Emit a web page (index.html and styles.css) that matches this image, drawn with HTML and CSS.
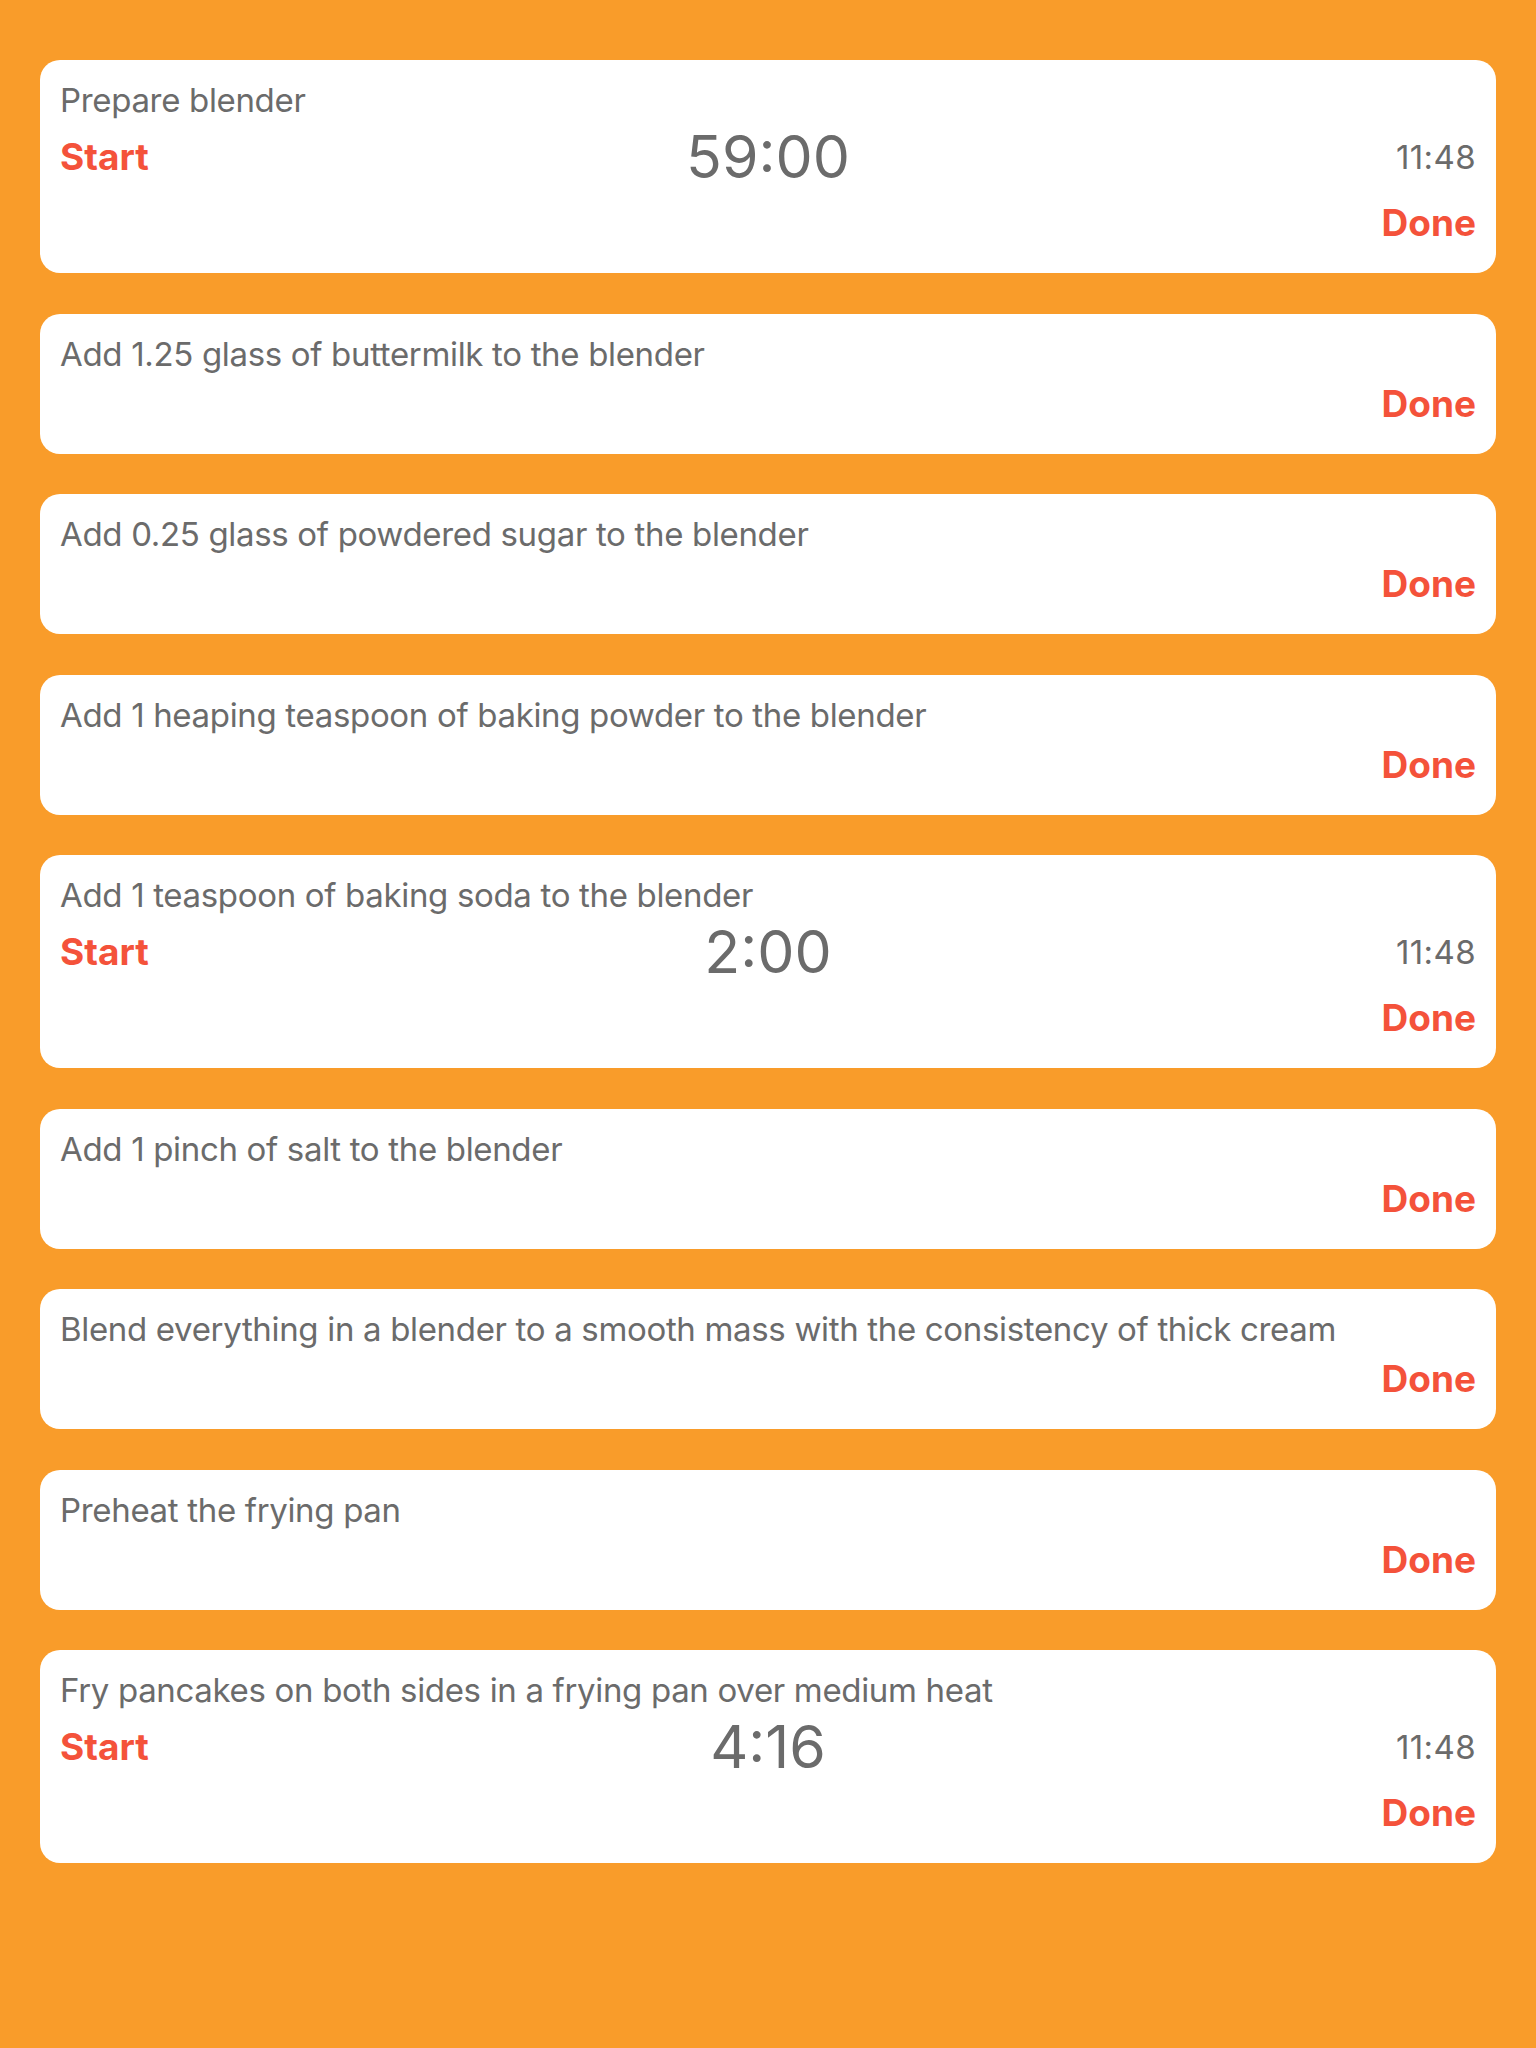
FILE: index.html
```html
<!DOCTYPE html>
<html lang="en">
<head>
<meta charset="utf-8">
<title>Pancakes</title>
<link rel="stylesheet" href="styles.css">
</head>
<body>
<main class="steps">
  <section class="card">
    <div class="title">Prepare blender</div>
    <div class="timer-row">
      <span class="action start">Start</span>
      <span class="timer">59:00</span>
      <span class="clock">11:48</span>
    </div>
    <div class="done-row"><span class="action">Done</span></div>
  </section>
  <section class="card">
    <div class="title">Add 1.25 glass of buttermilk to the blender</div>
    <div class="done-row"><span class="action">Done</span></div>
  </section>
  <section class="card">
    <div class="title">Add 0.25 glass of powdered sugar to the blender</div>
    <div class="done-row"><span class="action">Done</span></div>
  </section>
  <section class="card">
    <div class="title">Add 1 heaping teaspoon of baking powder to the blender</div>
    <div class="done-row"><span class="action">Done</span></div>
  </section>
  <section class="card">
    <div class="title">Add 1 teaspoon of baking soda to the blender</div>
    <div class="timer-row">
      <span class="action start">Start</span>
      <span class="timer">2:00</span>
      <span class="clock">11:48</span>
    </div>
    <div class="done-row"><span class="action">Done</span></div>
  </section>
  <section class="card">
    <div class="title">Add 1 pinch of salt to the blender</div>
    <div class="done-row"><span class="action">Done</span></div>
  </section>
  <section class="card">
    <div class="title">Blend everything in a blender to a smooth mass with the consistency of thick cream</div>
    <div class="done-row"><span class="action">Done</span></div>
  </section>
  <section class="card">
    <div class="title">Preheat the frying pan</div>
    <div class="done-row"><span class="action">Done</span></div>
  </section>
  <section class="card">
    <div class="title">Fry pancakes on both sides in a frying pan over medium heat</div>
    <div class="timer-row">
      <span class="action start">Start</span>
      <span class="timer">4:16</span>
      <span class="clock">11:48</span>
    </div>
    <div class="done-row"><span class="action">Done</span></div>
  </section>
</main>
</body>
</html>
```
FILE: styles.css
```css
html, body {
  margin: 0;
  padding: 0;
}
body {
  background: #f99c2a;
  min-height: 2048px;
  font-family: Inter, "Liberation Sans", sans-serif;
  color: #6b6b6b;
}
.steps {
  display: flex;
  flex-direction: column;
  gap: 40.5px;
  padding: 60px 40px;
}
.card {
  background: #ffffff;
  border-radius: 20px;
  padding: 20px 20px;
}
.title {
  font-size: 33px;
  line-height: 40px;
  letter-spacing: -0.33px;
  white-space: nowrap;
}
.timer-row {
  display: grid;
  grid-template-columns: 1fr auto 1fr;
  align-items: center;
  height: 73px;
}
.timer {
  font-size: 59px;
  line-height: 73px;
  font-weight: 400;
}
.clock {
  justify-self: end;
  font-size: 33px;
  line-height: 40px;
  letter-spacing: 0.4px;
}
.start {
  justify-self: start;
}
.action {
  color: #f4523a;
  font-weight: 700;
  font-size: 37px;
  line-height: 60px;
}
.done-row {
  display: flex;
  justify-content: flex-end;
  height: 60px;
}
```
